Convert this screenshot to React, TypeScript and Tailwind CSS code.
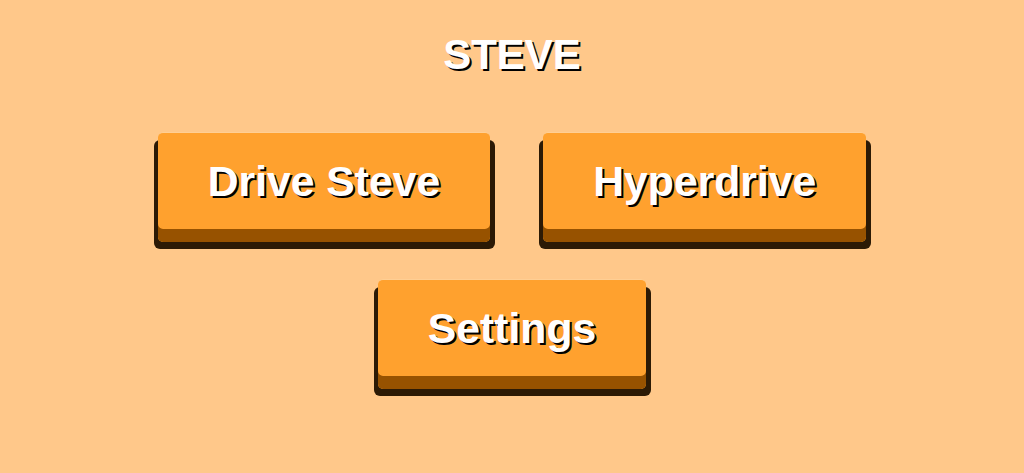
const MENU_ROWS: string[][] = [["Drive Steve", "Hyperdrive"], ["Settings"]];

function MenuButton({ label }: { label: string }) {
  return (
    <button className="relative h-[110px] cursor-pointer">
      {/* dark drop layer behind the key */}
      <span className="absolute left-[-4px] right-[-5px] top-[8px] bottom-[-7px] rounded-[6px] bg-[#2c1a05]" />
      <span className="relative flex h-full items-center rounded-[5px] border-t border-[#ffcf94] bg-[#ffa12e] px-[50px] pb-[13px] shadow-[inset_0_-13px_0_#975200]">
        <span className="text-[42.7px] font-bold leading-normal text-white [text-shadow:2px_2px_0_#000]">
          {label}
        </span>
      </span>
    </button>
  );
}

export default function App() {
  return (
    <div
      className="flex h-[473px] w-full flex-col items-center bg-[#ffc88a] pt-[23px]"
      style={{ fontFamily: '"Liberation Sans", Arial, sans-serif' }}
    >
      <h1 className="text-[42px] font-bold leading-normal text-white [text-shadow:2px_2px_0_#000]">STEVE</h1>

      <div className="mt-[46px] flex flex-col items-center gap-[37px]">
        {MENU_ROWS.map((row, i) => (
          <div key={i} className="flex justify-center gap-[53px]">
            {row.map((label) => (
              <MenuButton key={label} label={label} />
            ))}
          </div>
        ))}
      </div>
    </div>
  );
}
